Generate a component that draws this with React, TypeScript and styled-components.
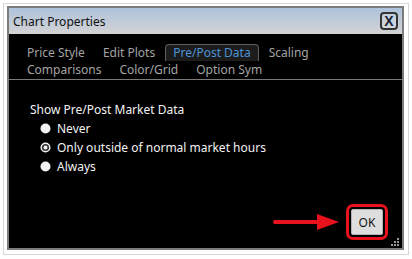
import React from "react";
import styled, { createGlobalStyle } from "styled-components";

const Global = createGlobalStyle`
  html, body { margin: 0; padding: 0; background: #ffffff; }
  body { font-family: "Noto Sans", "Open Sans", sans-serif; }
  * { box-sizing: border-box; }
`;

const Frame = styled.div`
  margin: 3px 3px 0 3px;
  width: 406px;
  height: 252px;
  border: 1px solid #d6d6d6;
  padding: 2px 4px 4px 3px;
  background: #ffffff;
`;

const Window = styled.div`
  width: 397px;
  height: 244px;
  border: 2px solid #7c7c7c;
  display: flex;
  flex-direction: column;
  background: #000;
`;

const TitleBar = styled.div`
  height: 26px;
  flex: none;
  display: flex;
  align-items: center;
  justify-content: space-between;
  padding: 0 4px 0 4px;
  background: linear-gradient(#aec3dc, #d3d3d3);
`;

const Title = styled.div`
  font-size: 12px;
  color: #111;
`;

const CloseButton = styled.div`
  width: 18px;
  height: 18px;
  border: 2px solid #333;
  border-radius: 4px;
  display: flex;
  align-items: center;
  justify-content: center;
  font-family: "Liberation Sans", sans-serif;
  font-weight: bold;
  font-size: 14px;
  color: #1a2236;
  background: rgba(255, 255, 255, 0.15);
`;

const Body = styled.div`
  flex: 1;
  position: relative;
  display: flex;
  flex-direction: column;
  padding-top: 10px;
`;

const TabRows = styled.div`
  display: flex;
  flex-direction: column;
  padding-left: 10px;
  border-bottom: 1px solid #7a7a7a;
  padding-bottom: 1px;
`;

const TabRow = styled.div`
  display: flex;
  gap: 2px;
`;

const Tab = styled.div<{ $active?: boolean }>`
  font-size: 12px;
  line-height: 16px;
  padding: 0 7px;
  border: 1px solid ${(p) => (p.$active ? "#5e5e5e" : "transparent")};
  border-bottom: none;
  border-radius: 4px 4px 0 0;
  color: ${(p) => (p.$active ? "#4b92d6" : "#a4a4a4")};
  background: ${(p) => (p.$active ? "#1c1c1c" : "transparent")};
  white-space: nowrap;
`;

const Section = styled.div`
  padding: 22px 0 0 21px;
  display: flex;
  flex-direction: column;
`;

const SectionLabel = styled.div`
  font-size: 12px;
  line-height: 16px;
  color: #f2f2f2;
  margin-bottom: 1px;
`;

const RadioRow = styled.div`
  display: flex;
  align-items: center;
  gap: 6px;
  height: 19px;
  padding-left: 10px;
  font-size: 12px;
  color: #f2f2f2;
`;

const Footer = styled.div`
  margin-top: auto;
  display: flex;
  justify-content: flex-end;
  align-items: center;
  padding: 0 14px 8px 0;
`;

const Highlight = styled.div`
  border: 3.5px solid #e8121c;
  border-radius: 7px;
  padding: 2px;
  display: flex;
`;

const OkButton = styled.div`
  width: 32px;
  height: 26px;
  background: #dedede;
  border: 1px solid #b4b4b4;
  border-radius: 2px;
  display: flex;
  align-items: center;
  justify-content: center;
  font-size: 12px;
  color: #111;
`;

const Grip = styled.svg`
  position: absolute;
  right: 2px;
  bottom: 1px;
`;

const Radio = ({ checked }: { checked?: boolean }) => (
  <svg width="11" height="11" viewBox="0 0 11 11">
    <circle cx="5.5" cy="5.5" r="5" fill="#f4f4f4" />
    {checked && <circle cx="5.5" cy="5.5" r="2.8" fill="none" stroke="#333" strokeWidth="1.6" />}
  </svg>
);

const Arrow = () => (
  <svg width="70" height="18" viewBox="0 0 70 18" style={{ marginRight: 3 }}>
    <rect x="0" y="7" width="46" height="4" rx="2" fill="#e8121c" />
    <polygon points="44,1 66,9 44,17" fill="#e8121c" />
  </svg>
);

export default function App() {
  return (
    <>
      <Global />
      <Frame>
        <Window>
          <TitleBar>
            <Title>Chart Properties</Title>
            <CloseButton>X</CloseButton>
          </TitleBar>
          <Body>
            <TabRows>
              <TabRow>
                <Tab>Price Style</Tab>
                <Tab>Edit Plots</Tab>
                <Tab $active>Pre/Post Data</Tab>
                <Tab>Scaling</Tab>
              </TabRow>
              <TabRow>
                <Tab>Comparisons</Tab>
                <Tab>Color/Grid</Tab>
                <Tab>Option Sym</Tab>
              </TabRow>
            </TabRows>
            <Section>
              <SectionLabel>Show Pre/Post Market Data</SectionLabel>
              <RadioRow>
                <Radio />
                Never
              </RadioRow>
              <RadioRow>
                <Radio checked />
                Only outside of normal market hours
              </RadioRow>
              <RadioRow>
                <Radio />
                Always
              </RadioRow>
            </Section>
            <Footer>
              <Arrow />
              <Highlight>
                <OkButton>OK</OkButton>
              </Highlight>
            </Footer>
            <Grip width="9" height="9" viewBox="0 0 9 9">
              <rect x="6" y="0" width="2" height="2" fill="#9a9a9a" />
              <rect x="3" y="3" width="2" height="2" fill="#9a9a9a" />
              <rect x="6" y="3" width="2" height="2" fill="#9a9a9a" />
              <rect x="0" y="6" width="2" height="2" fill="#9a9a9a" />
              <rect x="3" y="6" width="2" height="2" fill="#9a9a9a" />
              <rect x="6" y="6" width="2" height="2" fill="#9a9a9a" />
            </Grip>
          </Body>
        </Window>
      </Frame>
    </>
  );
}
